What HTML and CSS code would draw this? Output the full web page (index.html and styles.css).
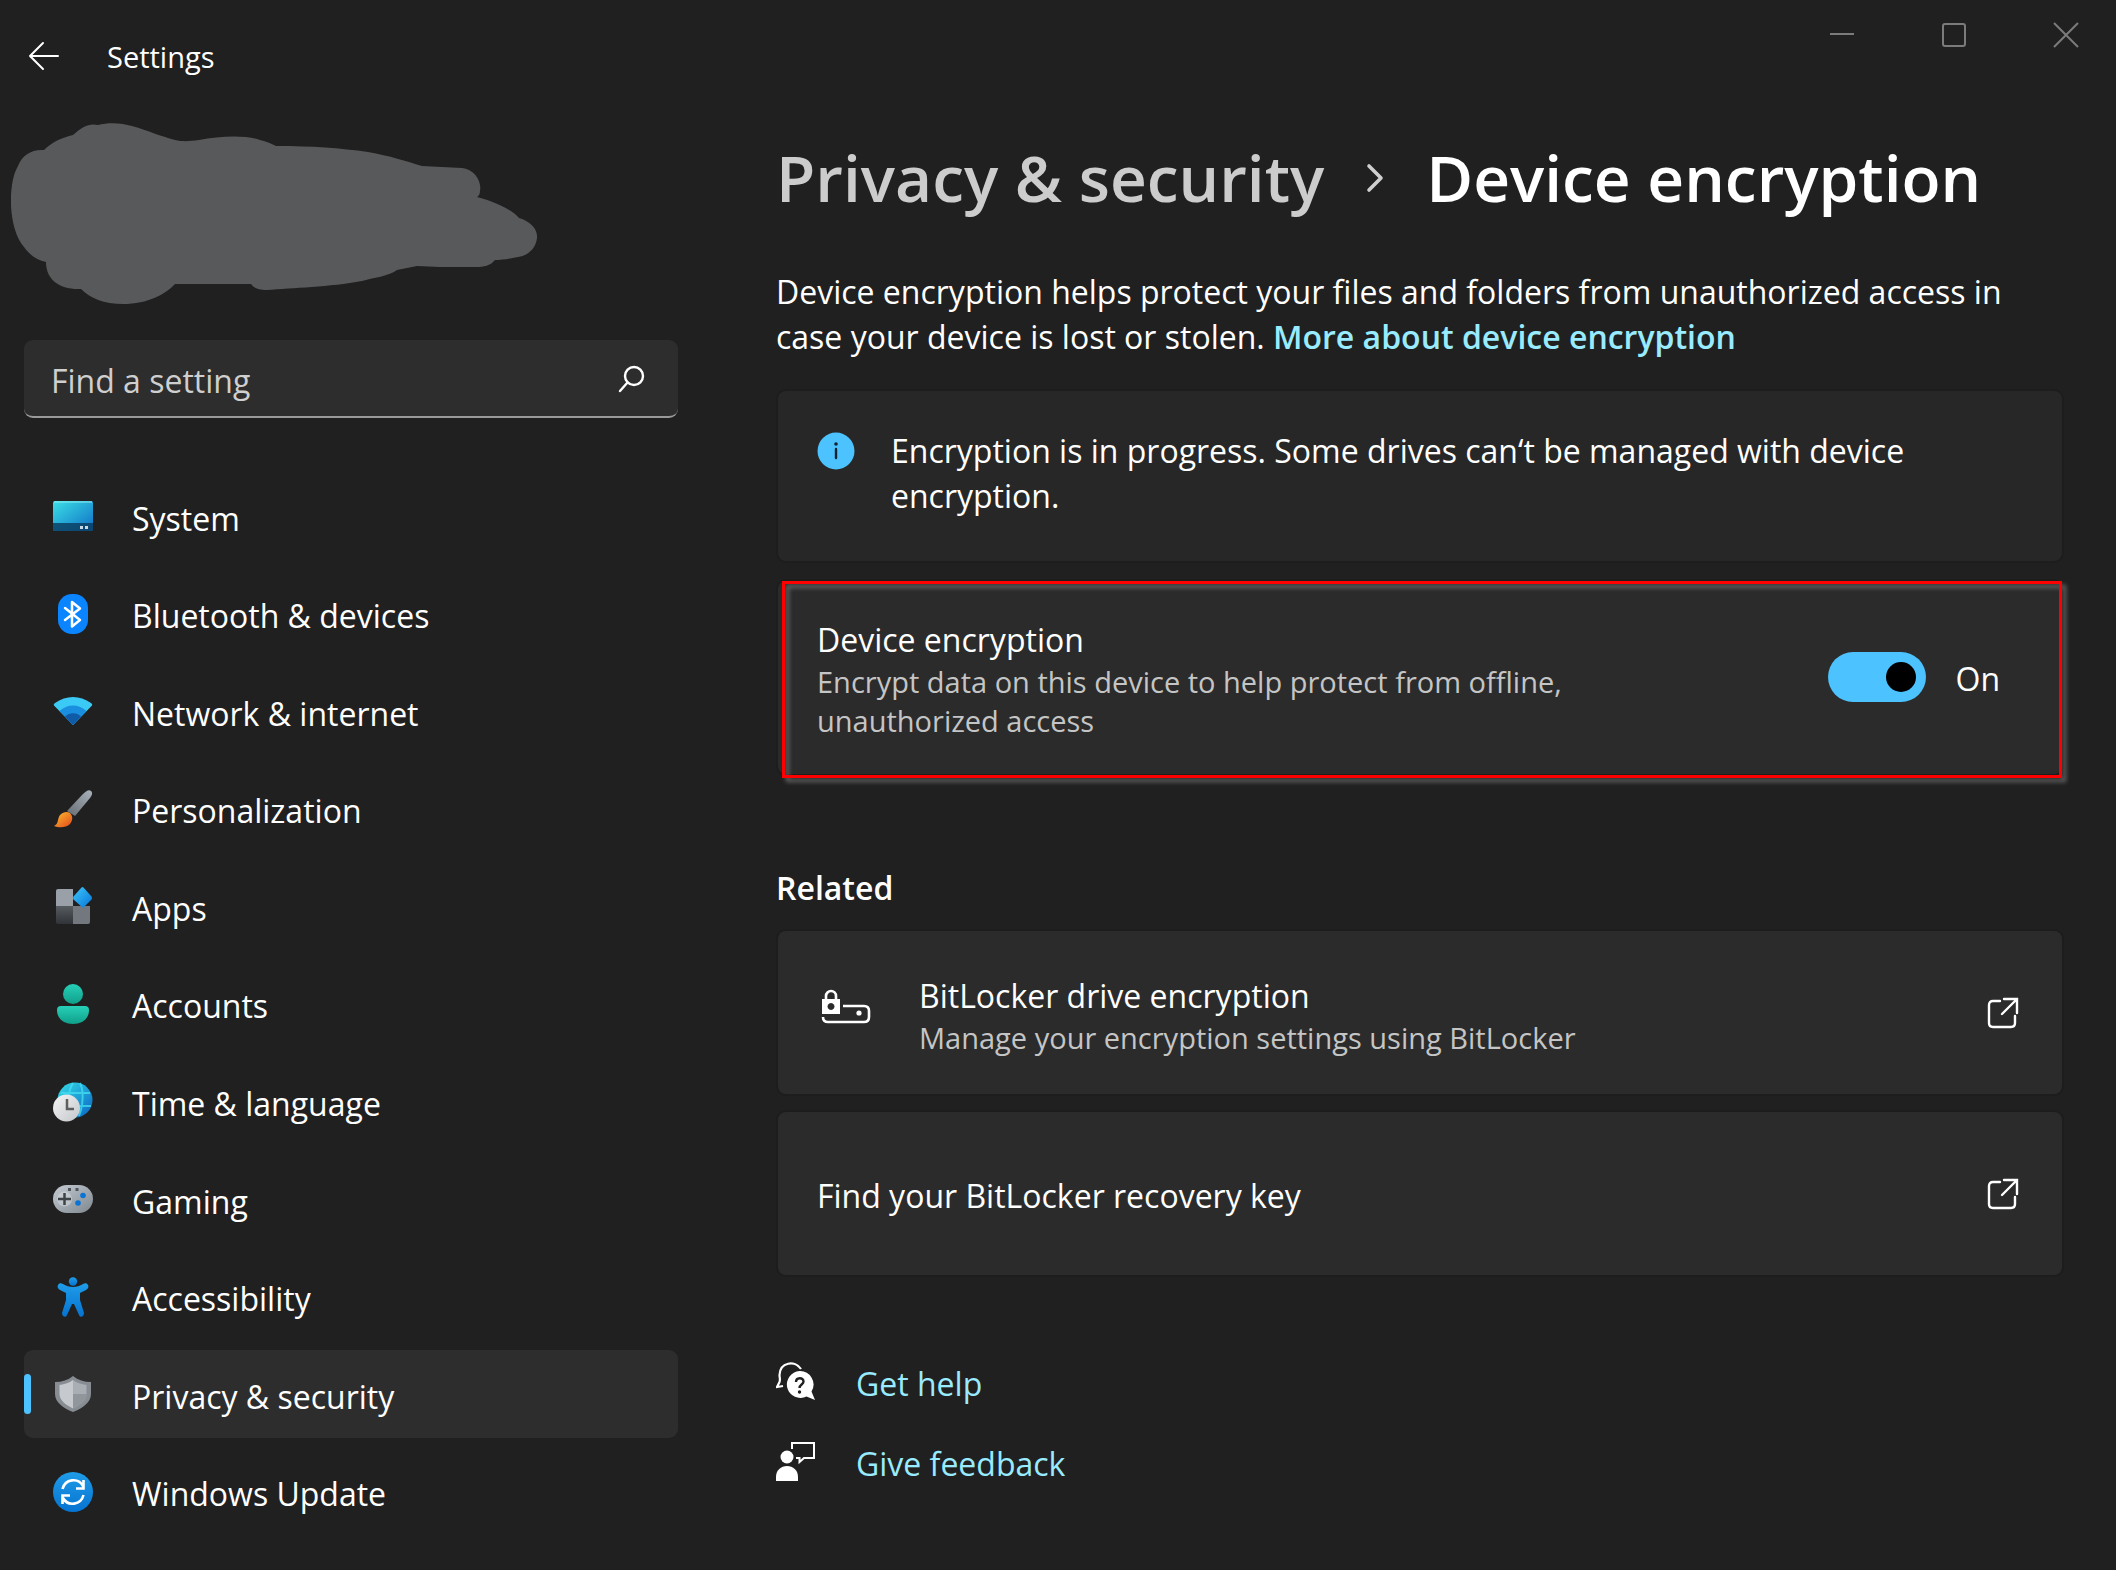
FILE: index.html
```html
<!DOCTYPE html>
<html lang="en">
<head>
<meta charset="utf-8">
<title>Settings</title>
<link rel="stylesheet" href="styles.css">
</head>
<body>
<div class="window">
  <header class="titlebar">
    <button class="icon-button back" type="button" aria-label="Back">
      <svg width="32" height="30" viewBox="0 0 32 30" fill="none" stroke="#fff" stroke-width="2" stroke-linecap="round" stroke-linejoin="round"><path d="M15 2 2 15l13 13M2 15h28"/></svg>
    </button>
    <span class="app-name">Settings</span>
    <div class="window-controls">
      <button class="icon-button control" type="button" aria-label="Minimize">
        <svg width="26" height="26" viewBox="0 0 26 26" fill="none" stroke="#7b7b7b" stroke-width="2"><path d="M1 12h24"/></svg>
      </button>
      <button class="icon-button control" type="button" aria-label="Maximize">
        <svg width="26" height="26" viewBox="0 0 26 26" fill="none" stroke="#7b7b7b" stroke-width="2"><rect x="2" y="2" width="22" height="22" rx="2"/></svg>
      </button>
      <button class="icon-button control" type="button" aria-label="Close">
        <svg width="26" height="26" viewBox="0 0 26 26" fill="none" stroke="#7b7b7b" stroke-width="2"><path d="m1 1 24 24M25 1 1 25"/></svg>
      </button>
    </div>
  </header>

  <div class="columns">
    <aside class="sidebar">
      <svg class="account" width="528" height="182" viewBox="0 0 528 182" aria-hidden="true">
        <path fill="#58595b" d="M44 27C51 20 60 15 73 12C82 4 89 0 98 2C109 -1 122 0 132 3C149 8 160 13 175 17C184 19 190 18 199 17C220 13 246 12 260 17C268 19 272 21 276 23C312 23 340 25 368 29C390 33 406 38 422 43L462 45C474 46 482 58 480 68Q480 72 477 74C500 80 514 89 519 95C530 98 538 106 537 115C536 125 528 133 518 134C508 136 502 137 495 137C490 143 484 144 476 144H440L417 143L397 147C390 153 372 155 362 158C330 164 292 165 267 167C258 167 254 165 251 161H175C166 171 148 181 123 181C104 181 90 175 81 166C60 167 46 157 46 139C36 137 29 131 24 124C14 113 10 90 11 72C12 58 14 50 18 43C22 32 32 26 44 27Z" transform="translate(-11 0)"/>
      </svg>

      <form class="search" role="search">
        <input class="search-input" type="search" placeholder="Find a setting" aria-label="Find a setting">
        <button class="icon-button" type="button" aria-label="Search">
          <svg width="30" height="30" viewBox="0 0 30 30" fill="none" stroke="#fff" stroke-width="2.400" stroke-linecap="round"><circle cx="17" cy="12" r="9"/><path d="M10.500 18.500 3 27"/></svg>
        </button>
      </form>

      <nav class="nav">
        <a class="nav-item" href="#system">
          <svg class="nav-icon" viewBox="0 0 40 40">
            <defs><linearGradient id="g-sys" x1="0" y1="0" x2="1" y2="1"><stop offset="0" stop-color="#3be0e6"/><stop offset="1" stop-color="#0f6fc6"/></linearGradient></defs>
            <rect y="5" width="40" height="30" rx="2" fill="url(#g-sys)"/><path d="M0 27h40v6a2 2 0 0 1-2 2H2a2 2 0 0 1-2-2z" fill="#0a3a5c" opacity=".8"/><path d="M1 6h38" stroke="#8ff0f5" stroke-width="1"/><path d="M27 30h3v3h-3zM32 30h3v3h-3z" fill="#c7d8e4"/>
          </svg>
          <span class="nav-label">System</span></a>
        <a class="nav-item" href="#bluetooth">
          <svg class="nav-icon" viewBox="0 0 40 40"><rect x="5" width="30" height="40" rx="14" fill="#0a84ff"/><path d="m12 14 15 12-8 6.500V8l8 6.500L12 26" fill="none" stroke="#fff" stroke-width="2.500" stroke-linejoin="round" stroke-linecap="round"/></svg>
          <span class="nav-label">Bluetooth &amp; devices</span></a>
        <a class="nav-item" href="#network">
          <svg class="nav-icon" viewBox="0 0 40 40"><path d="M20 34 1 14.500Q0 13 2 12C13 4 27 4 38 12q2 1 1 2.500z" fill="#3bcaf5"/><path d="M20 34 6.500 20C14 12.500 26 12.500 33.500 20z" fill="#1a8fe0"/><path d="M20 34l-8-8.500c4-4.500 12-4.500 16 0z" fill="#0f5ba8"/></svg>
          <span class="nav-label">Network &amp; internet</span></a>
        <a class="nav-item" href="#personalization">
          <svg class="nav-icon" viewBox="0 0 40 40">
            <defs><linearGradient id="g-brush" x1="1" y1="0" x2="0" y2="1"><stop offset="0" stop-color="#a9b1ba"/><stop offset="1" stop-color="#656c73"/></linearGradient><linearGradient id="g-tip" x1="0" y1="0" x2="1" y2="1"><stop offset="0" stop-color="#fdc02f"/><stop offset="1" stop-color="#e3471c"/></linearGradient></defs>
            <path d="M38 2c2 2 1 4-1 7L22 27l-8-5L29 6c4-4 7-6 9-4z" fill="url(#g-brush)"/><path d="M17 24c3 3 3 7 0 11-4 4-11 4-16 2 5-2 3-7 6-11 3-3 7-4 10-2z" fill="url(#g-tip)"/>
          </svg>
          <span class="nav-label">Personalization</span></a>
        <a class="nav-item" href="#apps">
          <svg class="nav-icon" viewBox="0 0 40 40">
            <defs>
              <linearGradient id="g-app" x1="0" y1="0" x2="1" y2="1"><stop offset="0" stop-color="#3ec8fb"/><stop offset="1" stop-color="#0673d8"/></linearGradient>
              <linearGradient id="g-tile" x1="0" y1="0" x2="0" y2="1"><stop offset="0" stop-color="#565b60"/><stop offset="1" stop-color="#303438"/></linearGradient>
            </defs>
            <path d="M5 3h15v18H3V5q0-2 2-2z" fill="#99a0a8"/><path d="M3 20h17v18H5q-2 0-2-2z" fill="url(#g-tile)"/><path d="M20 20h17v16q0 2-2 2H20z" fill="#72787e"/><path d="m30.500 1.500 8 9q1 1.500 0 3l-8.500 8.500-9.500-8.500q-1-1.500 0-3l8-9q1-1 2 0z" fill="url(#g-app)"/>
          </svg>
          <span class="nav-label">Apps</span></a>
        <a class="nav-item" href="#accounts">
          <svg class="nav-icon" viewBox="0 0 40 40">
            <defs><linearGradient id="g-acc" x1="0" y1="0" x2="0" y2="1"><stop offset="0" stop-color="#27d0b8"/><stop offset="1" stop-color="#109f8a"/></linearGradient></defs>
            <circle cx="20" cy="10" r="10" fill="url(#g-acc)"/><path d="M8 22h24q4 0 4 4c0 9-7 14-16 14S4 35 4 26q0-4 4-4z" fill="url(#g-acc)"/>
          </svg>
          <span class="nav-label">Accounts</span></a>
        <a class="nav-item" href="#time">
          <svg class="nav-icon" viewBox="0 0 40 40">
            <defs><linearGradient id="g-globe" x1="0" y1="0" x2="1" y2="1"><stop offset="0" stop-color="#35dfe8"/><stop offset="1" stop-color="#0a62c4"/></linearGradient><linearGradient id="g-clock" x1="0" y1="0" x2="1" y2="1"><stop offset="0" stop-color="#f4f5f6"/><stop offset="1" stop-color="#c3c6ca"/></linearGradient></defs>
            <circle cx="22" cy="18" r="17.500" fill="url(#g-globe)"/><g fill="none" stroke="#45dff0" stroke-width="2" opacity=".75"><path d="M8 11h29M20 24h18"/><path d="M20 1q-4 6-4 14M27 1q4 8 2 22-1 6-3 11"/></g><circle cx="13.500" cy="26" r="13.500" fill="url(#g-clock)"/><path d="M14 17v10h7" fill="none" stroke="#5e5e5e" stroke-width="2.500"/>
          </svg>
          <span class="nav-label">Time &amp; language</span></a>
        <a class="nav-item" href="#gaming">
          <svg class="nav-icon" viewBox="0 0 40 40">
            <defs><linearGradient id="g-pad" x1="0" y1="0" x2="1" y2="1"><stop offset="0" stop-color="#c5ccd3"/><stop offset="1" stop-color="#7f878f"/></linearGradient></defs>
            <rect y="6" width="40" height="28" rx="14" fill="url(#g-pad)"/><circle cx="11.500" cy="20" r="7.500" fill="#d8dde1" opacity=".5"/><path d="M5 20h13M11.500 14v12" stroke="#3e4348" stroke-width="2.500"/><path d="M15 9h3v3h-3zM22.500 9h3v3h-3z" fill="#4f555b"/><circle cx="30" cy="16.500" r="2.800" fill="#0a74d4"/><circle cx="25" cy="24" r="2.800" fill="#0a74d4"/>
          </svg>
          <span class="nav-label">Gaming</span></a>
        <a class="nav-item" href="#accessibility">
          <svg class="nav-icon" viewBox="0 0 40 40">
            <defs><linearGradient id="g-man" x1="0" y1="0" x2="0" y2="1"><stop offset="0" stop-color="#1f9ce8"/><stop offset="1" stop-color="#0673d1"/></linearGradient></defs>
            <g fill="url(#g-man)"><circle cx="20" cy="4.500" r="4.200"/><path d="M5 8c1-2 3-2 5-1 6 4 14 4 20 0 2-1 4-1 5 1s0 4-2 5l-6 3v7l4 13c0 4-4 5-5 2l-5-11h-2l-5 11c-1 3-5 2-5-2l4-13v-7l-6-3c-2-1-3-3-2-5z"/></g>
          </svg>
          <span class="nav-label">Accessibility</span></a>
        <a class="nav-item is-current" href="#privacy" aria-current="page">
          <svg class="nav-icon" viewBox="0 0 40 40"><path d="M20 2c5 4 11 6 18 6v12c0 8-8 14-18 18C10 34 2 28 2 20V8c7 0 13-2 18-6z" fill="#878d93"/><path d="M20 6c4 3 8 4 13.500 5v9c0 6-6 11-13.500 14.500z" fill="#a9aeb4"/><path d="M20 6c-4 3-8 4-13.500 5v9c0 6 6 11 13.500 14.500z" fill="#c6cace"/><path d="M20 20h13.500c0 6-6 11-13.500 14.500z" fill="#90969c"/></svg>
          <span class="nav-label">Privacy &amp; security</span></a>
        <a class="nav-item" href="#update">
          <svg class="nav-icon" viewBox="0 0 40 40">
            <defs><linearGradient id="g-upd" x1="0" y1="0" x2="0" y2="1"><stop offset="0" stop-color="#1f9ce8"/><stop offset="1" stop-color="#0673d1"/></linearGradient></defs>
            <circle cx="20" cy="20" r="20" fill="url(#g-upd)"/><g fill="none" stroke="#fff" stroke-width="2.600"><path d="M9.500 17C12 7 25 5 30 14M30.500 8v8.500H23"/><path d="M30.500 23C28 33 15 35 10 26M9.500 32v-8.500H17"/></g>
          </svg>
          <span class="nav-label">Windows Update</span></a>
      </nav>
    </aside>

    <main class="content">
      <h1 class="breadcrumb">
        <a class="crumb" href="#privacy">Privacy &amp; security</a>
        <svg width="18" height="30" viewBox="0 0 18 30" fill="none" stroke="#cfcfcf" stroke-width="3.600" stroke-linecap="round" stroke-linejoin="round" aria-hidden="true"><path d="m3 3 12 12L3 27"/></svg>
        <span>Device encryption</span>
      </h1>

      <p class="intro">Device encryption helps protect your files and folders from unauthorized access in case your device is lost or stolen. <a class="intro-link" href="#more">More about device encryption</a></p>

      <section class="card notice" role="status">
        <svg class="notice-icon" width="38" height="38" viewBox="0 0 38 38" aria-hidden="true"><circle cx="19" cy="19" r="18.500" fill="#4cc2ff"/><circle cx="19" cy="12" r="1.800" fill="#10232e"/><path d="M19 17v9" stroke="#10232e" stroke-width="2.400" stroke-linecap="round"/></svg>
        <p class="notice-text">Encryption is in progress. Some drives can‘t be managed with device encryption.</p>
      </section>

      <section class="card setting">
        <div class="setting-text">
          <label class="label" for="encryption">Device encryption</label>
          <p class="hint" id="encryption-hint">Encrypt data on this device to help protect from offline, unauthorized access</p>
        </div>
        <input class="toggle" id="encryption" type="checkbox" role="switch" aria-describedby="encryption-hint" checked>
        <span class="toggle-state">On</span>
      </section>

      <h2 class="section-title">Related</h2>

      <div class="related">
        <a class="card link-card" href="#bitlocker">
          <svg class="drive-icon" width="50" height="36" viewBox="0 0 50 36" fill="none" stroke="#fff" stroke-width="2.600"><path d="M5 11V7a5 5 0 0 1 10 0v4" /><path fill="#fff" stroke="none" fill-rule="evenodd" d="M1 10h18v15H1zm9 4a3.500 3.500 0 1 0 .01 0z"/><path d="M22 17h21q5 0 5 5v6q0 5-5 5H7q-5 0-5-5"/><circle cx="38" cy="24" r="2.600" fill="#fff" stroke="none"/></svg>
          <span class="link-text"><span class="label">BitLocker drive encryption</span><span class="hint">Manage your encryption settings using BitLocker</span></span>
          <svg width="32" height="32" viewBox="0 0 32 32" fill="none" stroke="#fff" stroke-width="2.400" stroke-linecap="round"><path d="M13 4H6Q2 4 2 8v18q0 4 4 4h18q4 0 4-4v-7M17 2h13v14M30 2 15 17"/></svg>
        </a>
        <a class="card link-card" href="#recovery">
          <span class="link-text"><span class="label">Find your BitLocker recovery key</span></span>
          <svg width="32" height="32" viewBox="0 0 32 32" fill="none" stroke="#fff" stroke-width="2.400" stroke-linecap="round"><path d="M13 4H6Q2 4 2 8v18q0 4 4 4h18q4 0 4-4v-7M17 2h13v14M30 2 15 17"/></svg>
        </a>
      </div>

      <div class="help">
        <a class="help-link" href="#help">
          <svg width="40" height="40" viewBox="0 0 40 40"><path d="M25 8C19-1 4 1 3.500 14c0 3 1 4 0 7L1 26l6-1" fill="none" stroke="#fff" stroke-width="2.200"/><path d="M23.500 10a13.500 13.500 0 1 0 7 25.500L39 39l-3.500-8.500A13.500 13.500 0 0 0 23.500 10z" fill="#fff"/><path d="M20 21c0-5 7.500-5 7.500-.5 0 3-4 3-4 6.500" fill="none" stroke="#202020" stroke-width="2.400"/><circle cx="23.500" cy="31" r="1.700" fill="#202020"/></svg>
          <span>Get help</span></a>
        <a class="help-link" href="#feedback">
          <svg width="40" height="40" viewBox="0 0 40 40"><circle cx="11" cy="16" r="6.500" fill="#fff"/><path d="M0 40v-4c0-7 5-11 11-11s11 4 11 11v4z" fill="#fff"/><path d="M16 8V2h22v15H28l-4.500 4v-4H20" fill="none" stroke="#fff" stroke-width="2"/></svg>
          <span>Give feedback</span></a>
      </div>
    </main>
  </div>
</div>
</body>
</html>
```

FILE: styles.css
```css
* {
  box-sizing: border-box;
}

body {
  margin: 0;
  background: #202020;
  color: #fff;
  font: 32px/45px "Open Sans", "Noto Sans", sans-serif;
}

h1,
h2,
p {
  margin: 0;
}

a {
  color: inherit;
  text-decoration: none;
}

svg {
  display: block;
  flex: none;
}

.icon-button {
  display: flex;
  padding: 0;
  border: 0;
  background: none;
}

.window {
  display: flex;
  flex-direction: column;
  min-height: 100vh;
}

/* Title bar */

.titlebar {
  display: flex;
  align-items: center;
  height: 112px;
  padding-left: 28px;
}

.app-name {
  margin-left: 47px;
  font-size: 29px;
}

.window-controls {
  display: flex;
  align-self: flex-start;
  margin-left: auto;
}

.control {
  justify-content: center;
  width: 112px;
  padding: 22px 0 0 12px;
}

/* Columns */

.columns {
  display: flex;
  flex: 1;
  gap: 98px;
  padding: 0 52px 34px 24px;
}

.sidebar {
  display: flex;
  flex: none;
  flex-direction: column;
  width: 654px;
}

.account {
  margin: 11px 0 35px -13px;
}

.search {
  display: flex;
  align-items: center;
  height: 78px;
  margin-bottom: 54px;
  padding: 2px 31px 0 27px;
  border-bottom: 2px solid #9a9a9a;
  border-radius: 9px;
  background: #2d2d2d;
}

.search-input {
  flex: 1;
  min-width: 0;
  padding: 2px 0 0;
  border: 0;
  outline: 0;
  background: none;
  color: #fff;
  font: inherit;
}

.search-input::placeholder {
  color: #cfcfcf;
}

.nav {
  display: flex;
  flex: 1;
  flex-direction: column;
  justify-content: space-between;
}

.nav-item {
  display: flex;
  align-items: center;
  gap: 39px;
  height: 88px;
  padding-left: 29px;
  border-radius: 9px;
}

.nav-label {
  padding-top: 4px;
}

.nav-icon {
  width: 40px;
  height: 40px;
}

.is-current {
  position: relative;
  background: #2d2d2d;
}

.is-current::before {
  content: "";
  position: absolute;
  top: 24px;
  left: 0;
  width: 7px;
  height: 40px;
  border-radius: 4px;
  background: #4cc2ff;
}

/* Content */

.content {
  flex: 1;
  min-width: 0;
}

.breadcrumb {
  display: flex;
  align-items: center;
  gap: 42px;
  padding-top: 21px;
  font-size: 64px;
  font-weight: 600;
  line-height: 90px;
}

.crumb {
  color: #cccccc;
}

.intro {
  padding: 46px 0 30px;
}

.intro-link {
  color: #99ebff;
  font-weight: 600;
}

.card {
  border: 2px solid #1d1d1d;
  border-radius: 10px;
  background: #2b2b2b;
}

.notice {
  display: flex;
  gap: 36px;
  min-height: 174px;
  padding: 37px 100px 0 39px;
  background: #272727;
}

.notice-icon {
  margin-top: 4px;
}

.setting {
  position: relative;
  display: flex;
  align-items: center;
  min-height: 197px;
  margin-top: 16px;
  padding: 0 62px 2px 39px;
}

/* Red call-out frame laid over the card */
.setting::after {
  content: "";
  position: absolute;
  inset: 0 0 -4px 4px;
  border: 3px solid #f00;
  filter: drop-shadow(4px 4px 2px #6a6a6a);
  pointer-events: none;
}

.setting-text {
  max-width: 780px;
  padding-top: 4px;
}

.label {
  display: block;
}

.hint {
  display: block;
  color: #c5c5c5;
  font-size: 29px;
  line-height: 39px;
}

.toggle {
  display: flex;
  align-items: center;
  justify-content: flex-end;
  width: 98px;
  height: 50px;
  margin: 0 29px 0 auto;
  padding: 0 10px;
  border-radius: 25px;
  appearance: none;
  background: #4cc2ff;
}

.toggle::before {
  content: "";
  width: 30px;
  height: 30px;
  border-radius: 50%;
  background: #000;
}

.toggle-state {
  padding-top: 4px;
}

.section-title {
  padding: 89px 0 19px;
  font-size: 32px;
  font-weight: 600;
}

.related {
  display: grid;
  gap: 14px;
}

.link-card {
  display: flex;
  align-items: center;
  min-height: 167px;
  padding: 0 43px 0 39px;
}

.drive-icon {
  margin: 0 48px 12px 4px;
}

.link-text {
  flex: 1;
  padding-top: 4px;
}

.help {
  display: grid;
  gap: 35px;
  padding-top: 84px;
}

.help-link {
  display: flex;
  align-items: flex-start;
  gap: 40px;
  justify-self: start;
  color: #99ebff;
}
```
